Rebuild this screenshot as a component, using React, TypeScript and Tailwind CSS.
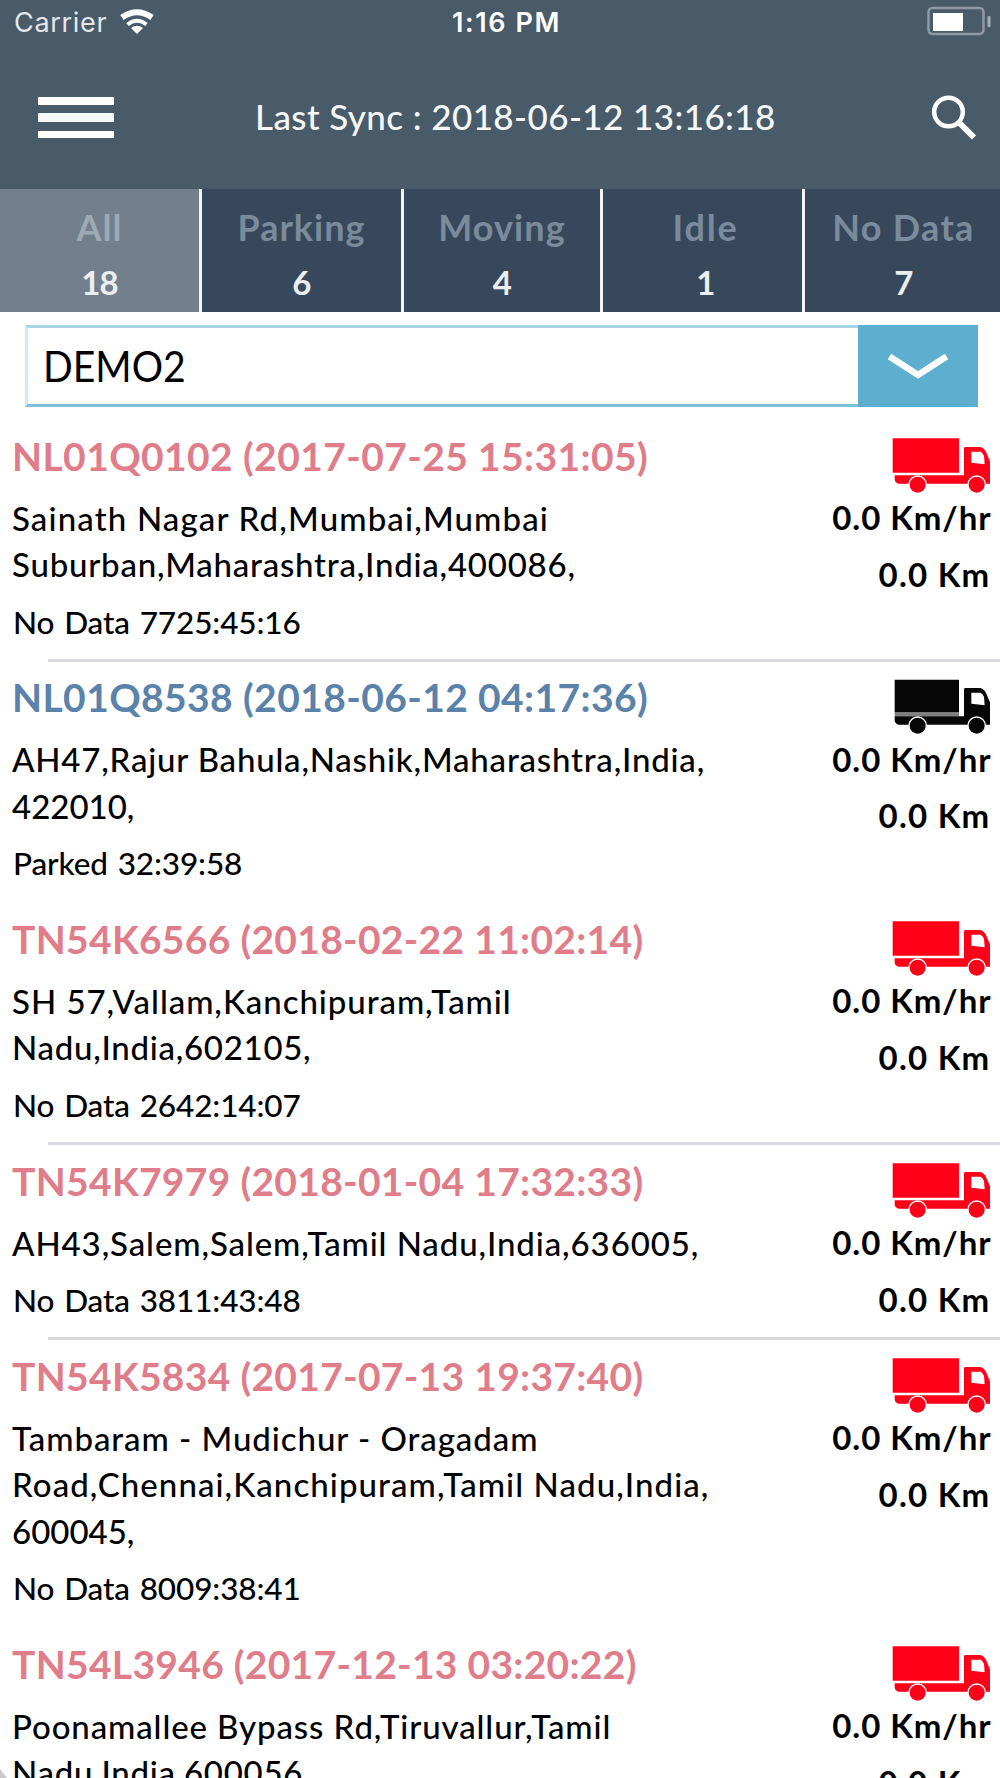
import React from 'react';

type Line = { text: string; track: string };
type Vehicle = {
  title: string;
  titleClass: string;
  address: Line[];
  status: string;
  height: string;
  parked?: boolean;
  divider?: boolean;
};

const red = 'text-[#e07d8a]';
const blue = 'text-[#5b82ab]';

const vehicles: Vehicle[] = [
  {
    title: 'NL01Q0102 (2017-07-25 15:31:05)',
    titleClass: `tracking-[0.4px] ${red}`,
    address: [
      { text: 'Sainath Nagar Rd,Mumbai,Mumbai', track: 'tracking-[1.15px]' },
      { text: 'Suburban,Maharashtra,India,400086,', track: 'tracking-[0.78px]' },
    ],
    status: 'No Data 7725:45:16',
    height: 'h-[241.7px]',
    divider: true,
  },
  {
    title: 'NL01Q8538 (2018-06-12 04:17:36)',
    titleClass: `tracking-[0.4px] ${blue}`,
    address: [
      { text: 'AH47,Rajur Bahula,Nashik,Maharashtra,India,', track: 'tracking-[0.8px]' },
      { text: '422010,', track: 'tracking-[0px]' },
    ],
    status: 'Parked 32:39:58',
    height: 'h-[241.7px]',
    parked: true,
  },
  {
    title: 'TN54K6566 (2018-02-22 11:02:14)',
    titleClass: `tracking-[0.3px] ${red}`,
    address: [
      { text: 'SH 57,Vallam,Kanchipuram,Tamil', track: 'tracking-[0.95px]' },
      { text: 'Nadu,India,602105,', track: 'tracking-[0.72px]' },
    ],
    status: 'No Data 2642:14:07',
    height: 'h-[241.7px]',
    divider: true,
  },
  {
    title: 'TN54K7979 (2018-01-04 17:32:33)',
    titleClass: `tracking-[0.3px] ${red}`,
    address: [{ text: 'AH43,Salem,Salem,Tamil Nadu,India,636005,', track: 'tracking-[0.9px]' }],
    status: 'No Data 3811:43:48',
    height: 'h-[195.2px]',
    divider: true,
  },
  {
    title: 'TN54K5834 (2017-07-13 19:37:40)',
    titleClass: `tracking-[0.3px] ${red}`,
    address: [
      { text: 'Tambaram - Mudichur - Oragadam', track: 'tracking-[0.94px]' },
      { text: 'Road,Chennai,Kanchipuram,Tamil Nadu,India,', track: 'tracking-[1.08px]' },
      { text: '600045,', track: 'tracking-[0px]' },
    ],
    status: 'No Data 8009:38:41',
    height: 'h-[288.2px]',
  },
  {
    title: 'TN54L3946 (2017-12-13 03:20:22)',
    titleClass: `tracking-[0.29px] ${red}`,
    address: [
      { text: 'Poonamallee Bypass Rd,Tiruvallur,Tamil', track: 'tracking-[0.89px]' },
      { text: 'Nadu,India,600056,', track: 'tracking-[0.72px]' },
    ],
    status: '',
    height: 'h-[241.7px]',
  },
];

const tabs = [
  { label: 'All', count: '18', track: 'tracking-[1px]', width: 'w-[199px]', active: true },
  { label: 'Parking', count: '6', track: 'tracking-[1px]', width: 'w-[199px]' },
  { label: 'Moving', count: '4', track: 'tracking-[1.1px]', width: 'w-[196px]' },
  { label: 'Idle', count: '1', track: 'tracking-[1.8px]', width: 'w-[199px] pl-[6px]' },
  { label: 'No Data', count: '7', track: 'tracking-[1.3px]', width: 'w-[195px] pl-[2px]' },
];

function Truck({ black }: { black?: boolean }) {
  const c = black ? '#070707' : '#ff0019';
  return (
    <svg className="h-[56px] w-[100px] shrink-0" viewBox="36 38 300 168" fill={c}>
      {black && <path d="M44 138H237V150H44Z" fill="#808080" />}
      <path d={black ? 'M44 40H237V138H44Z' : 'M38 39H237V142H38Z'} />
      <path d="M44 150H252V69Q252 65 257 65H301Q313 68 319 82L330 108V175H56Q44 172 44 162Z" />
      <path d="M274 79H302Q309 83 312 92L314 117L274 112Z" fill="#fff" />
      <circle cx="113" cy="178" r="28" fill="#fff" />
      <circle cx="290" cy="178" r="28" fill="#fff" />
      <circle cx="113" cy="178" r="24" />
      <circle cx="290" cy="178" r="24" />
    </svg>
  );
}

function Row({ v }: { v: Vehicle }) {
  return (
    <div className={`flex shrink-0 flex-col ${v.height}`}>
      <div className="flex flex-1 justify-between">
        <div className="flex flex-col pt-[11.5px] pl-[12px] whitespace-nowrap">
          <div className={`text-[39px] leading-[48px] font-bold ${v.titleClass}`}>{v.title}</div>
          <div className="mt-[15px] text-[33px] leading-[46.5px] font-medium">
            {v.address.map((l) => (
              <div key={l.text} className={l.track}>
                {l.text}
              </div>
            ))}
          </div>
          {v.status && (
            <div className="mt-[14px] pl-px text-[31.5px] leading-[40px] font-medium tracking-[-0.12px] [word-spacing:2px]">
              {v.status}
            </div>
          )}
        </div>
        <div className="flex flex-col items-end pt-[17.5px] pr-[8.5px] text-[33px] leading-[46px] font-bold whitespace-nowrap">
          <Truck black={v.parked} />
          <div className="mt-[0.5px] tracking-[0.95px]">0.0 Km/hr</div>
          <div className="mt-[10.5px] pr-px tracking-[1.25px]">0.0 Km</div>
        </div>
      </div>
      {v.divider && <div className="ml-12 h-[3px] bg-[#d8d9df]" />}
    </div>
  );
}

export default function App() {
  return (
    <div className="relative flex h-[1778px] w-[1000px] flex-col overflow-hidden bg-white font-['Lato',sans-serif] text-black">
      <header className="h-[189px] shrink-0 bg-[#495a69] text-white">
        <div className="grid h-[44px] grid-cols-3 pt-[1px] font-['Inter',sans-serif] text-[27px] leading-[44px]">
          <div className="flex pl-[14px]">
            <span className="tracking-[0.7px] text-[#e4e8eb]">Carrier</span>
            <svg className="mt-[8px] ml-[13px] h-[25px] w-[34px]" viewBox="0 0 34 25" fill="none" stroke="#fff">
              <path d="M2 8.5Q17 -2 32 8.5" strokeWidth="6" />
              <path d="M7.5 15.500Q17 8 26.500 15.500" strokeWidth="4" />
              <path d="M17 25L11 19Q17 14.500 23 19Z" fill="#fff" stroke="none" />
            </svg>
          </div>
          <div className="pl-[13px] text-center font-semibold tracking-[1.6px]">1:16 PM</div>
          <svg className="mt-[5px] mr-[9px] h-[30px] w-[64px] justify-self-end" viewBox="0 0 64 30">
            <rect x="1.500" y="2" width="55" height="26" rx="4" fill="none" stroke="#8e99a3" strokeWidth="2.500" />
            <rect x="6" y="7" width="30" height="18" fill="#fff" />
            <rect x="60.500" y="10" width="3" height="11" rx="1" fill="#a4adb5" />
          </svg>
        </div>
        <div className="flex h-[145px] items-start pt-[48px] pr-[23px] pl-[38px]">
          <div className="mt-[5px] flex w-[76px] flex-col gap-[8.5px]">
            <div className="h-[7.5px] bg-white" />
            <div className="h-[9px] bg-[#f6f9f9]" />
            <div className="h-[7.5px] bg-white" />
          </div>
          <div className="ml-[141px] text-[35px] leading-[48px] font-medium tracking-[0.41px] whitespace-nowrap text-[#f6f7f8]">
            Last Sync : 2018-06-12 13:16:18
          </div>
          <svg className="mt-[2px] ml-auto h-[46px] w-[46px]" viewBox="0 0 46 46" fill="none" stroke="#fff">
            <circle cx="17.500" cy="18" r="14.300" strokeWidth="4.500" />
            <path d="M28 28.500L43 43.500" strokeWidth="6" />
          </svg>
        </div>
      </header>

      <nav className="flex h-[123px] shrink-0 justify-between bg-[#f3f4f6]">
        {tabs.map((t) => (
          <div
            key={t.label}
            className={`flex flex-col items-center pt-[14px] ${t.width} ${t.active ? 'bg-[#737f8c] text-[#9daab4]' : 'bg-[#37485d] text-[#7a8b9b]'}`}
          >
            <div className={`text-[36px] leading-[48px] font-bold ${t.track}`}>{t.label}</div>
            <div className="mt-[6.5px] text-[33px] leading-[48px] font-bold tracking-[-0.8px] text-[#eceef0]">{t.count}</div>
          </div>
        ))}
      </nav>

      <div className="mt-[13px] mr-[22px] ml-[25px] flex h-[82px] shrink-0">
        <div className="flex flex-1 items-center border-t-[3px] border-b-[3px] border-l-[3px] border-t-[#a6d5e5] border-b-[#7cc0d8] border-l-[#d0e8f0] pt-px pl-[15px]">
          <span className="origin-left scale-x-91 text-[43px]">DEMO2</span>
        </div>
        <div className="flex w-[120px] items-center justify-center bg-[#5daecf]">
          <svg className="h-[28px] w-[62px]" viewBox="0 0 62 28" fill="none" stroke="#fff" strokeWidth="6.500">
            <path d="M2.500 4.500L31 23L59.500 4.500" />
          </svg>
        </div>
      </div>

      <main className="mt-[13px] flex flex-col">
        {vehicles.map((v) => (
          <Row key={v.title} v={v} />
        ))}
      </main>
      <svg className="absolute bottom-0 left-0 h-[9px] w-[7px]" viewBox="0 0 7 9">
        <path d="M0 0L7 9H0Z" fill="#c9c9c9" />
      </svg>
    </div>
  );
}
